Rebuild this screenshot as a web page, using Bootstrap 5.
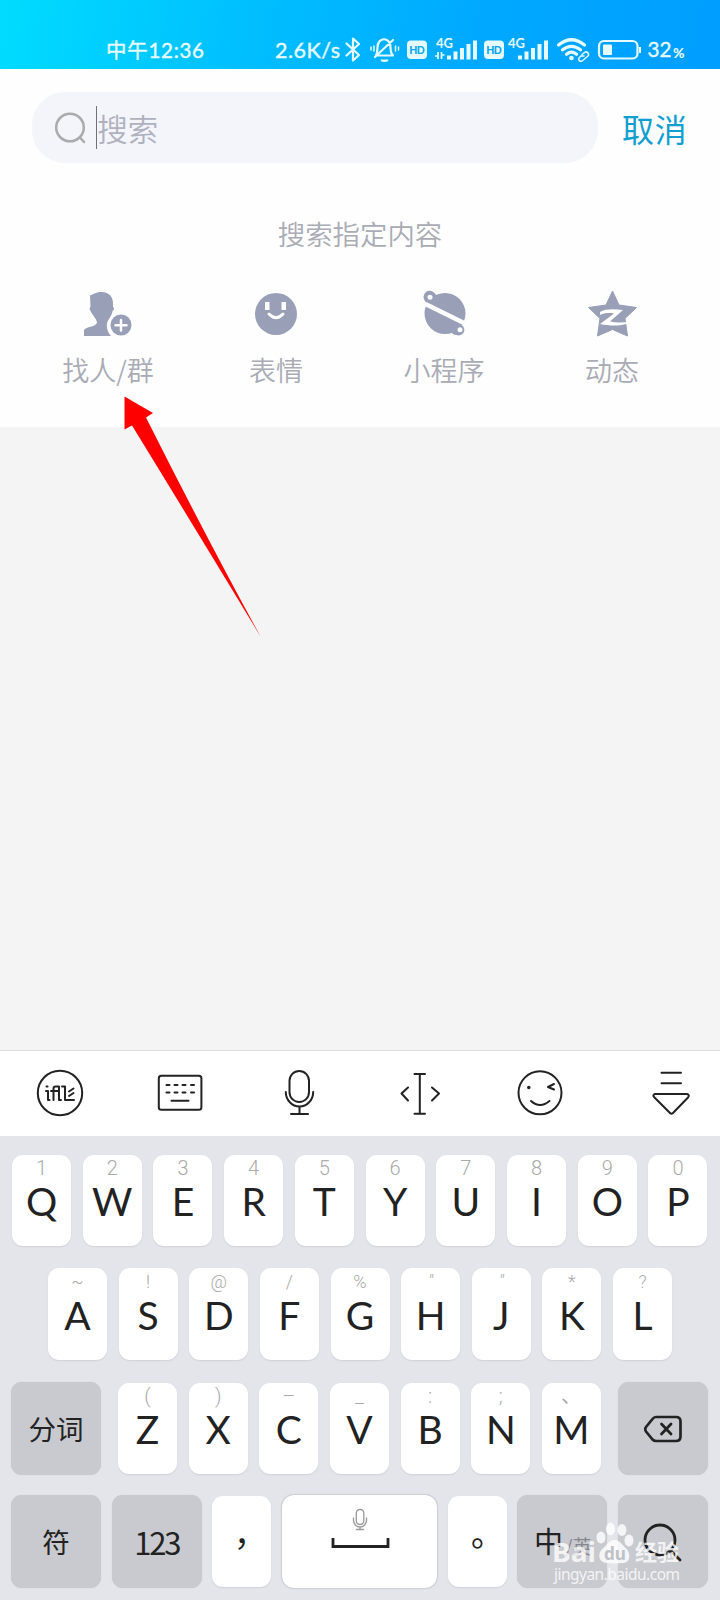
<!DOCTYPE html>
<html lang="zh-CN">
<head>
<meta charset="utf-8">
<meta name="viewport" content="width=device-width, initial-scale=1">
<title>搜索</title>
<link href="https://cdn.jsdelivr.net/npm/bootstrap@5.3.0/dist/css/bootstrap.min.css" rel="stylesheet">
<style>
  body { width: 720px; height: 1600px; overflow: hidden; background: #f4f4f4; font-family: "Noto Sans", "Noto Sans CJK SC", sans-serif; }
  svg { display: block; flex: none; }
  .screen { height: 1600px; }
  .statusbar { height: 69px; background: linear-gradient(100deg, #00dcff 0%, #00c0ff 33%, #00a9ff 66%, #009eff 100%); }
  .statusbar svg { fill: #e6fbff; font-family: Lato, "Noto Sans CJK SC", sans-serif; }
  .medium { stroke: #e6fbff; stroke-width: .4; }
  .ln { fill: none; stroke: #e6fbff; stroke-width: 2.2; stroke-linecap: round; stroke-linejoin: round; }
  .ln-thick { stroke-width: 3.2; }
  .ln-thin { stroke-width: 1.5; }
  .panel { height: 358px; padding: 23px 32px 0; background: #fefefe; font-family: "Noto Sans CJK SC", sans-serif; }
  .searchbox { width: 566px; height: 71px; border-radius: 33px; background: #f4f5fa; padding-left: 22px; color: #afb1bf; font-size: 30.5px; font-weight: 350; }
  .searchbox .placeholder-text { padding-top: 2px; }
  .caret { width: 1.3px; height: 43px; background: #70707a; margin-left: 10px; }
  .cancel { color: #129fd0; font-size: 32px; line-height: 72px; margin-left: 24px; letter-spacing: .8px; white-space: nowrap; }
  .hinttitle { margin: 49px 0 0; line-height: 40px; font-size: 27.4px; color: #a9abb5; font-weight: 350; }
  .shortcuts { margin: 37px -8px 0; font-size: 27px; line-height: 40px; color: #a9abb5; font-weight: 350; }
  .shortcuts svg { margin: 0 auto 12px; }
  .g { fill: #989fb7; }
  .tools { height: 86px; border-top: 1px solid #dddde0; background: #fff; }
  .tools svg { fill: none; stroke: #222; stroke-width: 2; stroke-linecap: round; stroke-linejoin: round; }
  .keyboard { height: 464px; padding-top: 19px; background: #e4e5eb; }
  .krow { padding: 0 12.5px 0 12px; margin-bottom: 22px; }
  .krow2 { padding: 0 48px; }
  .krow3 { padding: 0 12px 0 11px; margin-bottom: 20px; }
  .key { width: 59px; height: 91px; border-radius: 11px; background: #fff; box-shadow: 0 1px 1.5px #d0d1d8; color: #222; text-align: center; }
  .key i { display: block; font: 300 20px/26px Roboto, sans-serif; color: #aaa; height: 26px; }
  .key b { display: block; font: 400 39px/40px Lato, sans-serif; }
  .krow2 .key { height: 92px; }
  .krow2 .key i { height: 27px; line-height: 28px; font-size: 18px; }
  .krow2 .key .prime { font-style: italic; }
  .letters { width: 483px; }
  .fnkey { width: 90px; height: 93px; border-radius: 11px; background: #c9cacf; color: #222; font: 400 27.500px/1 "Noto Sans CJK SC", sans-serif; box-shadow: 0 0 1px #c0c1c6; }
  .num { font-size: 31px; letter-spacing: -2.2px; }
  .space { width: 155px; height: 93px; border-radius: 12px; background: #fff; box-shadow: 0 0 2px #94959b; }
  .punct { font: 400 33px/93px "Noto Sans CJK TC", sans-serif; }
  .overlay { left: 0; top: 0; pointer-events: none; }
</style>
</head>
<body>
<div class="screen position-relative d-flex flex-column">
  <header class="statusbar d-flex">
    <svg width="270" height="69" viewBox="0 0 270 69"><text class="medium" x="106" y="57.500" font-size="20.500" textLength="98">中午12:36</text></svg>
    <svg width="72" height="69" viewBox="270 0 72 69"><text class="medium" x="275" y="57.500" font-size="21.500" textLength="65">2.6K/s</text></svg>
    <svg width="24" height="69" viewBox="342 0 24 69"><path class="ln" d="M346.500 43.500L359 55l-6 5.500V38.500l6 5.500-12.500 11.500"/></svg>
    <svg width="38" height="69" viewBox="366 0 38 69"><path class="ln" d="M376 55.500h17c-2-2-2.500-4-2.500-8 0-11-13-11-13 0 0 3 0 5-1.500 8M375 57l18-17"/><path class="ln ln-thin" d="M374 46v5M395.500 46v5M371 47v3M398.500 47v3"/><path d="M380.500 59.500h8a4 2.500 0 0 1-8 0z"/></svg>
    <svg width="27" height="69" viewBox="404 0 27 69"><rect x="407" y="40.500" width="20" height="18.500" rx="4"/><text x="409.300" y="53.700" font-size="10.500" font-weight="900" fill="#08aaf3" textLength="15.500">HD</text></svg>
    <svg width="50" height="69" viewBox="431 0 50 69"><text x="436" y="48" font-size="12.500" font-weight="700" textLength="17" lengthAdjust="spacingAndGlyphs">4G</text><path d="M438 52v7M441.500 52v7M435 56h3M441.500 55h3" stroke="#e6fbff" stroke-width="1.700"/><rect x="447" y="55.500" width="4" height="4"/><rect x="453.500" y="51.500" width="4" height="8"/><rect x="460" y="48" width="4" height="11.500"/><rect x="466.500" y="44" width="4" height="15.500"/><rect x="473" y="40.500" width="4" height="19"/></svg>
    <svg width="70" height="69" viewBox="481 0 70 69"><rect x="484" y="40.500" width="20" height="18.500" rx="4"/><text x="486.300" y="53.700" font-size="10.500" font-weight="900" fill="#08a5f5" textLength="15.500">HD</text><text x="508" y="48" font-size="12.500" font-weight="700" textLength="17" lengthAdjust="spacingAndGlyphs">4G</text><rect x="518" y="55.500" width="4" height="4"/><rect x="524.500" y="51.500" width="4" height="8"/><rect x="531" y="48" width="4" height="11.500"/><rect x="537.500" y="44" width="4" height="15.500"/><rect x="544" y="40.500" width="4" height="19"/></svg>
    <svg width="43" height="69" viewBox="551 0 43 69"><path class="ln ln-thick" d="M558.500 45q13-10.500 26 0M562.500 49.800q9-7 18 0M566.500 54.200q5-4 10 0"/><circle cx="571.500" cy="58" r="2.300"/><path class="ln ln-thin" d="M582 54.500l2.500-2a2.500 2.500 0 0 1 3 4l-2.500 2M584 56l-3 0-2 2a2.200 2.200 0 0 0 3 3l2.500-2"/></svg>
    <svg width="126" height="69" viewBox="594 0 126 69"><rect class="ln" x="599" y="41" width="38.500" height="17.500" rx="5"/><rect x="603" y="44.500" width="9" height="10.500" rx="1"/><path d="M639 47h2v6h-2z"/><text class="medium" x="647.500" y="57" font-size="22" textLength="24" lengthAdjust="spacingAndGlyphs">32</text><text x="673" y="57.500" font-size="13.500" font-weight="900" textLength="11.500" lengthAdjust="spacingAndGlyphs">%</text></svg>
  </header>

  <section class="panel">
    <div class="d-flex">
      <div class="searchbox d-flex align-items-center">
        <svg width="32" height="32" viewBox="0 0 32 32" fill="none" stroke="#aaabad" stroke-width="2.500" stroke-linecap="round"><circle cx="16" cy="15.500" r="13.800"/><path d="M26 25.500l4 4.500"/></svg>
        <span class="caret"></span><span class="placeholder-text">搜索</span>
      </div>
      <a class="cancel text-decoration-none">取消</a>
    </div>
    <p class="hinttitle text-center">搜索指定内容</p>
    <div class="shortcuts d-flex text-center">
      <div class="w-25"><svg class="g" width="52" height="48" viewBox="82 290 52 48"><path d="M90 295.500C94 294 96 292 102 292C109 292 113 297 113 303V307C115 308 114 310 112.500 311C112 315 110 317 109 319C105 324 107 332 111 336H84V330C87 326 97 327 97 322C96 319 93 315 91 312L89.500 309L90.500 306Z"/><circle cx="121" cy="325" r="10.500"/><path d="M121 320v10.500M115.500 325.200h11" stroke="#fff" stroke-width="2.500" stroke-linecap="round"/></svg>找人/群</div>
      <div class="w-25"><svg width="52" height="48" viewBox="250 290 52 48"><circle class="g" cx="276" cy="314" r="21"/><path fill="#fff" d="M265 302h4.500v8H265zM281.500 302h4.500v8h-4.500z"/><path d="M269 314q7 7.500 14 0" fill="none" stroke="#fff" stroke-width="3" stroke-linecap="round"/></svg>表情</div>
      <div class="w-25"><svg width="52" height="48" viewBox="418 290 52 48"><circle class="g" cx="445" cy="313.500" r="20.500"/><path class="g" d="M425 301a5.600 5.600 0 1 1 9.500-8l27 32a5.600 5.600 0 0 1-5 10c-3 0-5-2-6-4z"/><path d="M425.500 304L465 323.500" stroke="#fefefe" stroke-width="4.500"/><circle cx="430" cy="297.300" r="2.500" fill="#fff"/><circle cx="460" cy="329.800" r="2.500" fill="#fff"/></svg>小程序</div>
      <div class="w-25"><svg width="52" height="48" viewBox="586 290 52 48"><path class="g" stroke="#989fb7" stroke-linejoin="round" d="M612.500 291L619 305L636.500 307.500L625 318.500L627.500 336L612.500 329.500L597.500 336L600 318.500L588.500 307.500L606 305Z"/><path fill="#fff" d="M600 312C605 308.500 615 309 623 310L610 321.500C617 323 624 322.500 630 321.500C626 326 612 326.500 600 324L614 313.500C609 312.500 604 313 600 315Z"/></svg>动态</div>
    </div>
  </section>

  <main class="flex-grow-1"></main>

  <nav class="tools d-flex">
    <svg width="120" height="85" viewBox="0 1051 120 85"><circle cx="60" cy="1093" r="22.200"/><path d="M46 1091h2v9h1.500M46.500 1086.500h1M51 1091h7M58 1086.500h-2.500q-2 0-2 2v11.500M57 1086.500h2v13.500h2M62 1086.500h3v13.500h9M69 1091.500l4.500-3M69 1096l4.500-3"/></svg>
    <svg width="120" height="85" viewBox="120 1051 120 85"><rect x="158.800" y="1075.800" width="42.600" height="34" rx="2.500"/><path d="M166.500 1085h3M174.500 1085h3M182.500 1085h3M191 1085h3M166.500 1092.500h3M174.500 1092.500h3M182.500 1092.500h3M191 1092.500h3M171.500 1100.800h17"/></svg>
    <svg width="120" height="85" viewBox="240 1051 120 85"><rect x="289.500" y="1071" width="19.500" height="31" rx="9.700"/><path d="M285.800 1092a13.700 14.500 0 0 0 27.400 0M299.500 1107v6.500M291 1114h17"/></svg>
    <svg width="120" height="85" viewBox="360 1051 120 85"><path d="M414.500 1074h10.500M414.500 1113.800h10.500M419.800 1074v39M408 1087.500l-6.500 6 6.500 7M432 1087.500l7 6-7 7"/></svg>
    <svg width="120" height="85" viewBox="480 1051 120 85"><circle cx="540" cy="1092.800" r="21.500"/><path d="M531 1101q9 8 18.500 0M554 1084l-6 3 6 2.500"/><circle cx="528.800" cy="1087.500" r=".8" fill="#222"/></svg>
    <svg width="120" height="85" viewBox="600 1051 120 85"><path d="M661.500 1072.800h19.500M661.500 1083.200h19.500M655 1094h32q3 1 1 3.500l-15 15.500q-1.500 1.500-3 0l-15.500-15.500q-2.500-2.500.5-3.500z"/></svg>
  </nav>

  <section class="keyboard">
    <div class="krow d-flex justify-content-between">
      <div class="key"><i>1</i><b>Q</b></div><div class="key"><i>2</i><b>W</b></div><div class="key"><i>3</i><b>E</b></div><div class="key"><i>4</i><b>R</b></div><div class="key"><i>5</i><b>T</b></div><div class="key"><i>6</i><b>Y</b></div><div class="key"><i>7</i><b>U</b></div><div class="key"><i>8</i><b>I</b></div><div class="key"><i>9</i><b>O</b></div><div class="key"><i>0</i><b>P</b></div>
    </div>
    <div class="krow krow2 d-flex justify-content-between">
      <div class="key"><i>~</i><b>A</b></div><div class="key"><i>!</i><b>S</b></div><div class="key"><i>@</i><b>D</b></div><div class="key"><i>/</i><b>F</b></div><div class="key"><i>%</i><b>G</b></div><div class="key"><i class="prime">"</i><b>H</b></div><div class="key"><i class="prime">"</i><b>J</b></div><div class="key"><i>*</i><b>K</b></div><div class="key"><i>?</i><b>L</b></div>
    </div>
    <div class="krow krow3 d-flex justify-content-between align-items-center">
      <div class="fnkey d-flex align-items-center justify-content-center">分词</div>
      <div class="letters d-flex justify-content-between">
        <div class="key"><i>(</i><b>Z</b></div><div class="key"><i>)</i><b>X</b></div><div class="key"><i>–</i><b>C</b></div><div class="key"><i>_</i><b>V</b></div><div class="key"><i>:</i><b>B</b></div><div class="key"><i>;</i><b>N</b></div><div class="key"><i>、</i><b>M</b></div>
      </div>
      <div class="fnkey d-flex align-items-center justify-content-center"><svg width="40" height="30" viewBox="643 1414 40 30" fill="none" stroke="#222" stroke-width="2.700" stroke-linecap="round" stroke-linejoin="round"><path d="M656 1417h20q4.500 0 4.500 4.500v15q0 4.500-4.500 4.500h-20q-2 0-3.500-1.500l-6.500-8q-1.500-2.500 0-4.500l6.500-8q1.500-2 3.500-2zM661.500 1424l9.500 10M671 1424l-9.500 10"/></svg></div>
    </div>
    <div class="krow krow3 d-flex justify-content-between align-items-center">
      <div class="fnkey d-flex align-items-center justify-content-center">符</div>
      <div class="fnkey num d-flex align-items-center justify-content-center">123</div>
      <div class="key punct">，</div>
      <div class="space"><svg width="155" height="93" viewBox="282 1495 155 93" fill="none"><path d="M333 1538v8.500h55V1538" stroke="#222" stroke-width="2.800"/><g stroke="#999" stroke-width="1.300" stroke-linecap="round"><rect x="356.300" y="1509.500" width="7.500" height="15" rx="3.700"/><path d="M353.500 1518v2a6.500 7 0 0 0 13 0v-2M360 1527v2.500M356.500 1529.500h7"/></g></svg></div>
      <div class="key punct">。</div>
      <div class="fnkey"><svg width="90" height="93" viewBox="518 1495 90 93"><text x="535" y="1553" font-size="29" fill="#222">中</text><text x="566" y="1554" font-size="19" fill="#85868b">/英</text></svg></div>
      <div class="fnkey"><svg width="90" height="93" viewBox="618 1495 90 93" fill="none" stroke="#222" stroke-width="2.800" stroke-linecap="round"><circle cx="660" cy="1540" r="15"/><path d="M671 1551l9 9"/></svg></div>
    </div>
  </section>

  <svg class="overlay position-absolute" width="720" height="1600" viewBox="0 0 720 1600">
    <path fill="#f00" d="M124.500 396.500L153 413L146 417.500Q204 533 260.500 636.500Q190 520 132 425.500L124.500 429.500Z"/>
    <g fill="#fff" fill-opacity=".8" font-family="Noto Sans, Noto Sans CJK SC, sans-serif">
      <text x="552" y="1562" font-size="27" font-weight="700" textLength="44" lengthAdjust="spacingAndGlyphs">Bai</text>
      <ellipse cx="601" cy="1537.500" rx="4.500" ry="6"/><ellipse cx="610.500" cy="1529" rx="4.500" ry="6.500"/><ellipse cx="622" cy="1530" rx="4.500" ry="6"/><ellipse cx="629" cy="1540.500" rx="4.500" ry="6"/>
      <path d="M614.500 1540c5 0 7 4 11 8 5 4 6 14-2 15-6 .500-12 .500-17 0-9-1-9-11-3-15 4-4 6-8 11-8z"/>
      <text x="604" y="1559.500" font-size="18" font-weight="700" fill="#c0c1c6" fill-opacity="1" textLength="22" lengthAdjust="spacingAndGlyphs">du</text>
      <text x="635" y="1560" font-size="22" font-weight="700" font-family="Noto Sans CJK SC" textLength="44">经验</text>
      <text x="554" y="1580" font-size="15.500" textLength="126">jingyan.baidu.com</text>
    </g>
  </svg>
</div>
<script src="https://cdn.jsdelivr.net/npm/bootstrap@5.3.0/dist/js/bootstrap.bundle.min.js"></script>
</body>
</html>
